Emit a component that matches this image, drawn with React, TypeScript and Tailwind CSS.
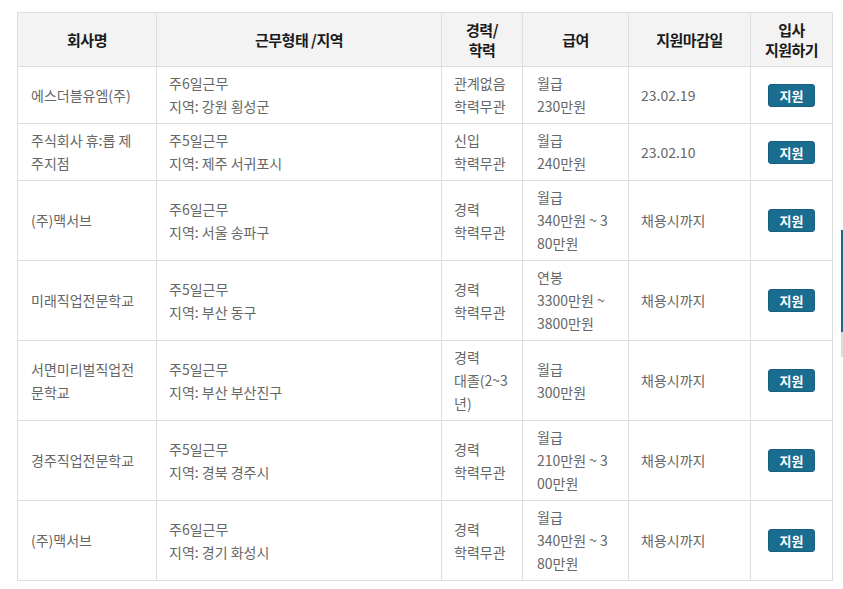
import React from "react";

interface Job {
  company: string[];
  work: string;
  area: string;
  career: string[];
  pay: string[];
  deadline: string;
}

const jobs: Job[] = [
  {
    company: ["에스더블유엠(주)"],
    work: "주6일근무",
    area: "지역: 강원 횡성군",
    career: ["관계없음", "학력무관"],
    pay: ["월급", "230만원"],
    deadline: "23.02.19",
  },
  {
    company: ["주식회사 휴:롭 제", "주지점"],
    work: "주5일근무",
    area: "지역: 제주 서귀포시",
    career: ["신입", "학력무관"],
    pay: ["월급", "240만원"],
    deadline: "23.02.10",
  },
  {
    company: ["(주)맥서브"],
    work: "주6일근무",
    area: "지역: 서울 송파구",
    career: ["경력", "학력무관"],
    pay: ["월급", "340만원 ~ 3", "80만원"],
    deadline: "채용시까지",
  },
  {
    company: ["미래직업전문학교"],
    work: "주5일근무",
    area: "지역: 부산 동구",
    career: ["경력", "학력무관"],
    pay: ["연봉", "3300만원 ~", "3800만원"],
    deadline: "채용시까지",
  },
  {
    company: ["서면미리벌직업전", "문학교"],
    work: "주5일근무",
    area: "지역: 부산 부산진구",
    career: ["경력", "대졸(2~3", "년)"],
    pay: ["월급", "300만원"],
    deadline: "채용시까지",
  },
  {
    company: ["경주직업전문학교"],
    work: "주5일근무",
    area: "지역: 경북 경주시",
    career: ["경력", "학력무관"],
    pay: ["월급", "210만원 ~ 3", "00만원"],
    deadline: "채용시까지",
  },
  {
    company: ["(주)맥서브"],
    work: "주6일근무",
    area: "지역: 경기 화성시",
    career: ["경력", "학력무관"],
    pay: ["월급", "340만원 ~ 3", "80만원"],
    deadline: "채용시까지",
  },
];

const font = "font-['Noto_Sans_CJK_KR','Noto_Sans',sans-serif]";

function Lines({ lines }: { lines: string[] }) {
  return (
    <>
      {lines.map((l, i) => (
        <div key={i} className="whitespace-pre">
          {l}
        </div>
      ))}
    </>
  );
}

export default function App() {
  const th =
    "border border-[#dedede] bg-[#f3f3f3] text-center align-middle font-bold text-[15px] leading-[20px] text-[#1a1a1a] py-[6px] tracking-[-0.5px]";
  const td =
    "border border-[#dedede] align-middle px-[12px] py-[5px] text-[14px] leading-[23px] text-[#666]";

  return (
    <div className={`relative min-h-[589px] bg-white pt-[12px] pl-[17px] ${font}`}>
      <table className="table-fixed border-collapse w-[815px]">
        <colgroup>
          <col className="w-[139px]" />
          <col className="w-[285px]" />
          <col className="w-[81px]" />
          <col className="w-[106px]" />
          <col className="w-[122px]" />
          <col className="w-[82px]" />
        </colgroup>
        <thead>
          <tr className="h-[54px]">
            <th className={th}>회사명</th>
            <th className={th}>근무형태 /지역</th>
            <th className={th}>
              경력/
              <br />
              학력
            </th>
            <th className={th}>급여</th>
            <th className={th}>지원마감일</th>
            <th className={th}>
              입사
              <br />
              지원하기
            </th>
          </tr>
        </thead>
        <tbody>
          {jobs.map((job, i) => (
            <tr key={i}>
              <td className={`${td} pl-[13px]`}>
                <Lines lines={job.company} />
              </td>
              <td className={td}>
                <div>{job.work}</div>
                <div>{job.area}</div>
              </td>
              <td className={td}>
                <Lines lines={job.career} />
              </td>
              <td className={`${td} pl-[14px]`}>
                <Lines lines={job.pay} />
              </td>
              <td className={td}>{job.deadline}</td>
              <td className={`${td} text-center px-0`}>
                <button className="inline-flex h-[23px] w-[47px] items-center justify-center rounded-[3px] border border-[#15607f] bg-[#1b6d90] text-[13px] font-bold leading-none text-white">
                  지원
                </button>
              </td>
            </tr>
          ))}
        </tbody>
      </table>

      {/* scrollbar sliver on the right edge */}
      <div className="absolute left-[841px] top-[230px] w-[2px]">
        <div className="h-[102px] bg-[#1b6a8c]" />
        <div className="h-[25px] bg-[#dcdcdc]" />
      </div>
    </div>
  );
}
